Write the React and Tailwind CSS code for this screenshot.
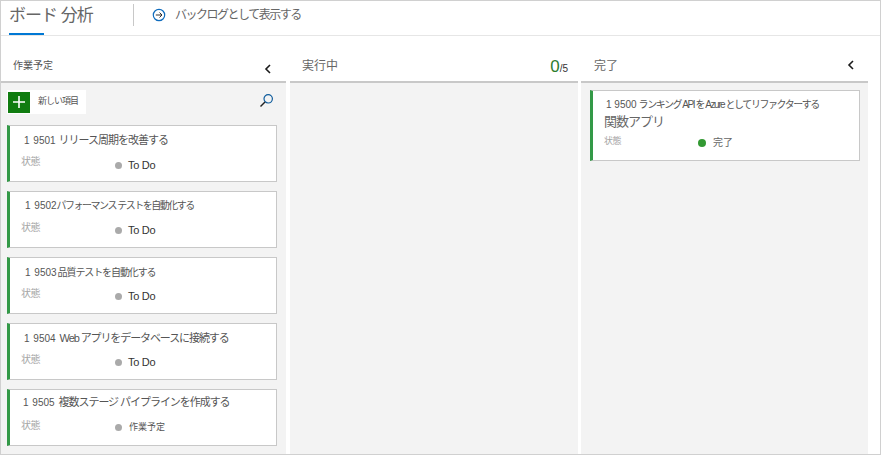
import React from "react";

function Card({ num, title, titleCls, top = "pt-[4px]", state = "To Do", stateCls = "text-[11px] tracking-[-0.3px] text-[#333]", stateTop = "top-[30px]" }) {
  return (
    <div className="h-[57px] w-[270px] shrink-0 border border-[#c8c8c8] border-l-[3px] border-l-[#339947] bg-white pl-[12px] relative">
      <div className={`whitespace-nowrap text-[#555] leading-[18px] ${top}`}>
        <span className="text-[10px] [word-spacing:1px]">{num}</span>
        <span className={titleCls}>{title}</span>
      </div>
      <div className="absolute left-[11px] top-[28px] text-[10px] tracking-[-0.5px] text-[#a6a6a6]">状態</div>
      <div className={`absolute left-[105px] flex items-center gap-[6px] ${stateTop}`}>
        <span className="h-[7px] w-[7px] rounded-full bg-[#aaaaaa]" />
        <span className={stateCls}>{state}</span>
      </div>
    </div>
  );
}

function Chevron() {
  return (
    <svg width="8" height="10" viewBox="0 0 8 10" fill="none" className="shrink-0">
      <path d="M6 1 L2 5 L6 9" stroke="#1a1a1a" strokeWidth="1.6" />
    </svg>
  );
}

export default function App() {
  return (
    <div className="h-[455px] w-[881px] overflow-hidden border border-[#d0d0d0] bg-white font-['Liberation_Sans','Noto_Sans_CJK_JP',sans-serif]">
      <div className="flex h-[35px] items-start border-b border-[#e6e6e6] pl-[8px]">
        <div className="relative h-[34px] w-[35px]">
          <div className="absolute bottom-0 left-0 h-[2px] w-[35px] bg-[#0078d4]" />
          <span className="absolute left-[0px] top-[3px] whitespace-nowrap text-[17px] tracking-[-1px] leading-[24px] text-[#666]">ボード 分析</span>
        </div>
        <div className="ml-[89px] mt-[3px] h-[22px] w-px bg-[#c8c8c8]" />
        <svg width="14" height="14" viewBox="0 0 14 14" fill="none" className="ml-[18px] mt-[7px]">
          <circle cx="7" cy="7" r="5.7" stroke="#0f6cbd" strokeWidth="1.2" />
          <path d="M3.8 7 H10 M7.5 4.5 L10 7 L7.5 9.5" stroke="#333" strokeWidth="1" />
        </svg>
        <span className="ml-[9px] mt-[4px] whitespace-nowrap text-[12px] tracking-[-1.5px] leading-[20px] text-[#666]">バックログとして表示する</span>
      </div>

      <div className="flex h-[418px] pt-[1px]">
        <div className="flex w-[285px] shrink-0 flex-col">
          <div className="flex h-[46px] items-end justify-between border-b-2 border-[#c8c8c8] pb-[7px] pl-[12px] pr-[14px]">
            <span className="text-[10px] leading-[16px] text-[#555]">作業予定</span>
            <Chevron />
          </div>
          <div className="flex flex-1 flex-col bg-[#f3f3f3] pl-[6px] pt-[7px]">
            <div className="flex h-[24px] items-center justify-between pr-[12px]">
              <div className="flex h-[24px] items-center bg-white pr-[8px]">
                <div className="ml-[1px] flex h-[21px] w-[22px] items-center justify-center bg-[#107c10]">
                  <svg width="14" height="14" viewBox="0 0 14 14"><path d="M7 1 V13 M1 7 H13" stroke="white" strokeWidth="1.6" /></svg>
                </div>
                <span className="ml-[8px] text-[9px] tracking-[-1px] text-[#555]">新しい項目</span>
              </div>
              <svg width="15" height="15" viewBox="0 0 15 15" fill="none" className="-translate-y-[2px]">
                <circle cx="9.2" cy="5.8" r="4.2" stroke="#0f5c9c" strokeWidth="1.2" />
                <path d="M6 9 L1.5 13.5" stroke="#222" strokeWidth="1.4" />
              </svg>
            </div>
            <div className="mt-[11px] flex flex-col gap-[9px]">
              <Card num="1 9501" title="リリース周期を改善する" titleCls="ml-[3px] text-[11px] tracking-[-1px]" top="pt-[4px] pl-[2px]" stateTop="top-[31px]" />
              <Card num="1 9502" title="パフォーマンス テストを自動化する" titleCls="ml-[0px] text-[10px] tracking-[-1.5px]" top="pt-[3px] pl-[3px]" />
              <Card num="1 9503" title="品質テストを自動化する" titleCls="ml-[1px] text-[10px] tracking-[-1.1px]" top="pt-[4px] pl-[3px]" />
              <Card num="1 9504" title="Web アプリをデータベースに接続する" titleCls="ml-[4px] text-[11px] tracking-[-1.1px]" top="pt-[4px] pl-[2px]" />
              <Card num="1 9505" title="複数ステージ パイプラインを作成する" titleCls="ml-[4px] text-[11px] tracking-[-1.05px]" top="pt-[2px] pl-[1px]" state="作業予定" stateCls="text-[9px] text-[#555] ml-[1px]" stateTop="top-[31px]" />
            </div>
          </div>
        </div>

        <div className="ml-[4px] flex w-[288px] shrink-0 flex-col">
          <div className="flex h-[46px] items-end justify-between border-b-2 border-[#c8c8c8] pb-[6px] pl-[12px] pr-[10px]">
            <span className="text-[12px] leading-[18px] text-[#666]">実行中</span>
            <span className="translate-y-[4px] leading-[20px] text-[#333]">
              <span className="text-[17px] text-[#2d7d2d]">0</span>
              <span className="text-[10px]">/5</span>
            </span>
          </div>
          <div className="flex-1 bg-[#f3f3f3]" />
        </div>

        <div className="ml-[3px] flex w-[287px] shrink-0 flex-col">
          <div className="flex h-[46px] items-end justify-between border-b-2 border-[#c8c8c8] pb-[6px] pl-[13px] pr-[13px]">
            <span className="text-[12px] leading-[18px] text-[#666]">完了</span>
            <span className="pb-[5px]"><Chevron /></span>
          </div>
          <div className="flex-1 bg-[#f3f3f3] pl-[9px] pt-[7px]">
            <div className="relative h-[71px] w-[270px] border border-[#c8c8c8] border-l-[3px] border-l-[#339947] bg-white">
              <div className="absolute left-[13px] top-[4px] whitespace-nowrap leading-[16px] text-[#555]">
                <span className="text-[10px]">1 9500</span>
                <span className="ml-[2px] text-[10px] tracking-[-1.45px]">ランキング API を Azure としてリファクターする</span>
              </div>
              <div className="absolute left-[11px] top-[21px] whitespace-nowrap text-[13px] tracking-[-1px] leading-[20px] text-[#666]">関数アプリ</div>
              <div className="absolute left-[11px] top-[44px] text-[9px] tracking-[-0.5px] text-[#a6a6a6]">状態</div>
              <div className="absolute left-[105px] top-[45px] flex items-center gap-[7px]">
                <span className="h-[8px] w-[8px] rounded-full bg-[#339933]" />
                <span className="text-[10px] leading-[14px] text-[#666]">完了</span>
              </div>
            </div>
          </div>
        </div>
      </div>
    </div>
  );
}
